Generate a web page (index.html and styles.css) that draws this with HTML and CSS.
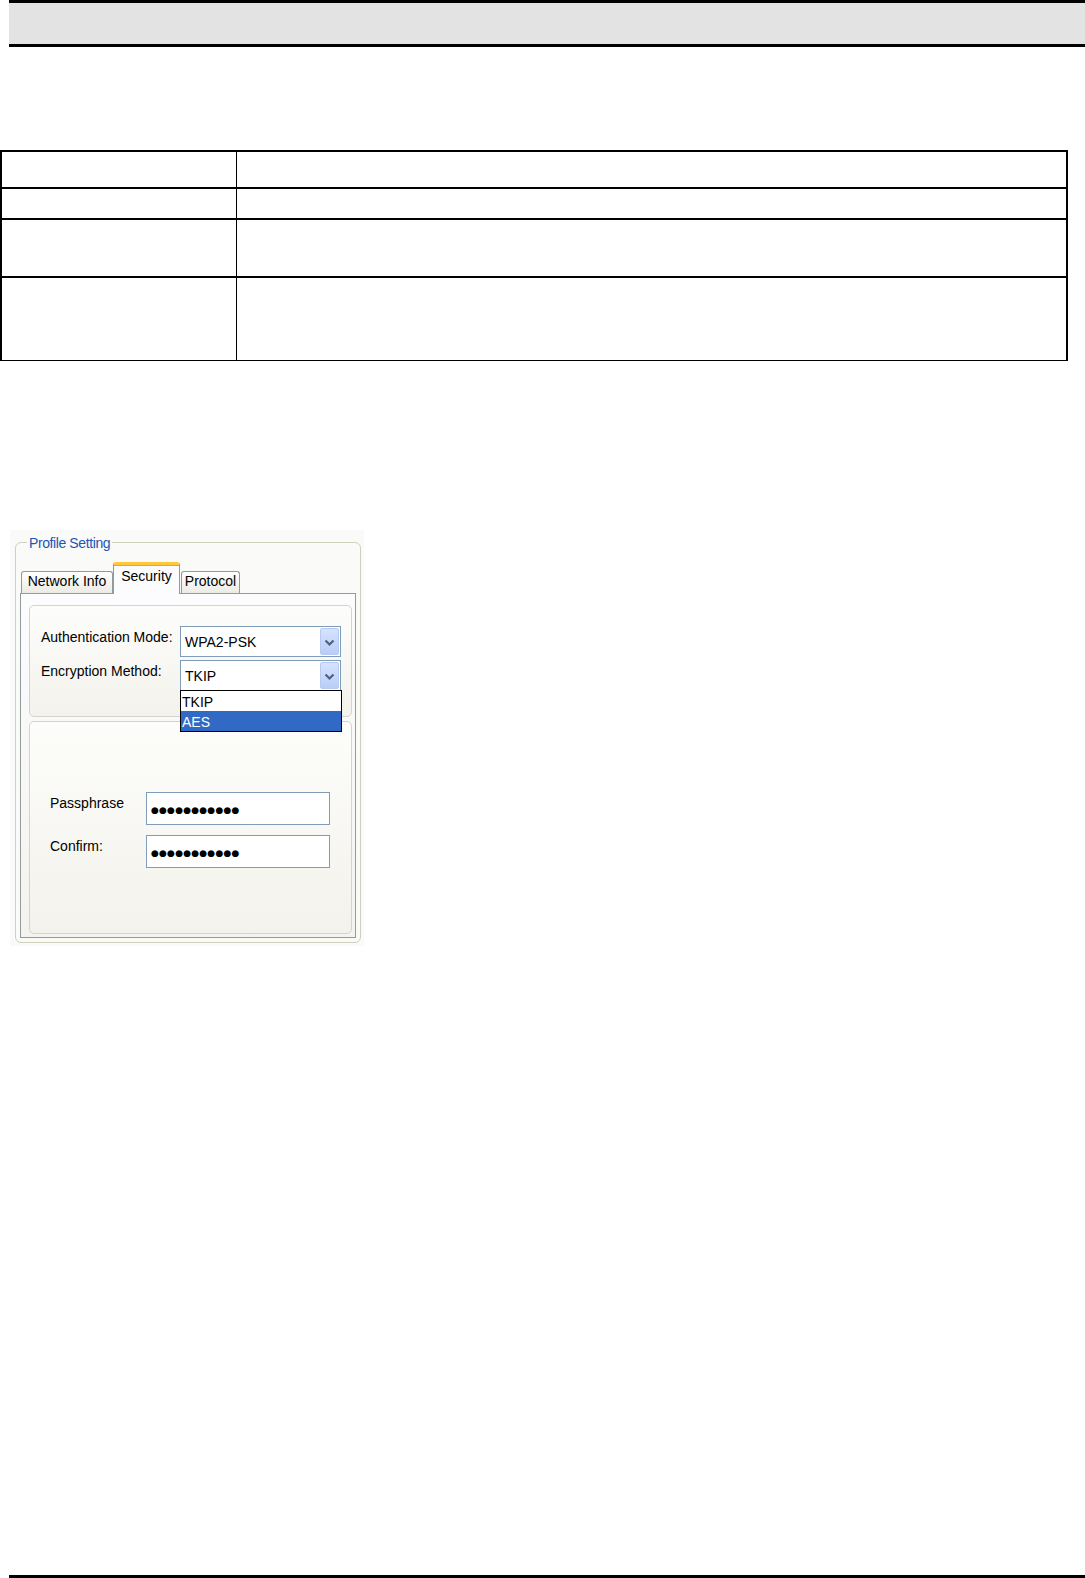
FILE: index.html
```html
<!DOCTYPE html>
<html lang="en">
<head>
    <meta charset="UTF-8">
    <meta name="viewport" content="width=device-width, initial-scale=1.0">
    <title>Profile Setting - Security</title>

    <link rel="stylesheet" href="styles.css">

</head>
<body>
<div class="page">
    <div class="page-header"></div>

    <!-- Settings table -->
    <div class="spec-table">
        <div class="spec-row row-1">
            <div class="spec-key"></div>
            <div class="spec-value"></div>
        </div>
        <div class="spec-row row-2">
            <div class="spec-key"></div>
            <div class="spec-value"></div>
        </div>
        <div class="spec-row row-3">
            <div class="spec-key"></div>
            <div class="spec-value"></div>
        </div>
        <div class="spec-row row-4">
            <div class="spec-key"></div>
            <div class="spec-value"></div>
        </div>
    </div>

    <!-- Screenshot of the utility -->
    <div class="screenshot">
        <div class="profile-box">
            <span class="profile-title">Profile Setting</span>

            <div class="tabs">
                <div class="tab tab-network">Network Info</div>
                <div class="tab tab-active">Security</div>
                <div class="tab tab-protocol">Protocol</div>
            </div>

            <div class="tab-panel">
                <div class="panel-group group-auth">
                    <div class="field-row">
                        <span class="field-label">Authentication Mode:</span>
                        <div class="combo">
                            <span class="combo-text">WPA2-PSK</span>
                            <span class="combo-btn">
                                <svg width="17" height="27" viewBox="0 0 17 27"><path d="M4.5 11.5 L8.5 15.5 L12.5 11.5" fill="none" stroke="#4d6185" stroke-width="2.2"/></svg>
                            </span>
                        </div>
                    </div>
                    <div class="field-row">
                        <span class="field-label">Encryption Method:</span>
                        <div class="combo">
                            <span class="combo-text">TKIP</span>
                            <span class="combo-btn">
                                <svg width="17" height="27" viewBox="0 0 17 27"><path d="M4.5 11.5 L8.5 15.5 L12.5 11.5" fill="none" stroke="#4d6185" stroke-width="2.2"/></svg>
                            </span>
                            <ul class="combo-list">
                                <li>TKIP</li>
                                <li class="selected">AES</li>
                            </ul>
                        </div>
                    </div>
                </div>

                <div class="panel-group group-key">
                    <div class="key-row">
                        <span class="key-label">Passphrase</span>
                        <div class="key-input"><span class="dots">●●●●●●●●●●●</span></div>
                    </div>
                    <div class="key-row">
                        <span class="key-label">Confirm:</span>
                        <div class="key-input"><span class="dots">●●●●●●●●●●●</span></div>
                    </div>
                </div>
            </div>
        </div>
    </div>

    <div class="page-footer"></div>
</div>
</body>
</html>
```

FILE: styles.css
```css
body {
    margin: 0;
    font-family: "Liberation Sans", Arial, sans-serif;
    color: #000;
    background: #fff;
}
.page {
    min-height: 1578px;
    display: flex;
    flex-direction: column;
}
.page-header {
    margin-left: 9px;
    height: 41px;
    border-top: 3px solid #000;
    border-bottom: 3px solid #000;
    background-color: #e3e3e3;
}
.page-footer {
    margin-top: auto;
    margin-left: 9px;
    height: 3px;
    background-color: #000;
}

/* table */
.spec-table {
    margin-top: 103px;
    width: 1068px;
    box-sizing: border-box;
    border: 2px solid #000;
    border-bottom-width: 1px;
}
.spec-row {
    display: flex;
    border-bottom: 2px solid #000;
}
.spec-row:last-child {
    border-bottom: none;
}
.row-1 { height: 35px; }
.row-2 { height: 29px; }
.row-3 { height: 56px; }
.row-4 { height: 82px; }
.spec-key {
    width: 234px;
    border-right: 1px solid #000;
}
.spec-value {
    flex: 1;
}

/* screenshot */
.screenshot {
    margin: 169px 0 0 10px;
    width: 354px;
    height: 416px;
    box-sizing: border-box;
    padding: 12px 3px 3px 5px;
    background-color: #fafaf8;
    font-size: 14px;
}
.profile-box {
    position: relative;
    height: 401px;
    box-sizing: border-box;
    padding: 19px 4px 4px 4px;
    border: 1px solid #d0d0bf;
    border-radius: 6px;
}
.profile-title {
    position: absolute;
    top: -8px;
    left: 11px;
    padding: 0 2px;
    line-height: 16px;
    letter-spacing: -0.4px;
    color: #1f55b5;
    background-color: #fafaf8;
}
.tabs {
    display: flex;
    align-items: flex-end;
    height: 31px;
    margin-left: 1px;
}
.tab {
    position: relative;
    height: 22px;
    box-sizing: border-box;
    border: 1px solid #919b9c;
    border-bottom: none;
    border-radius: 3px 3px 0 0;
    background: linear-gradient(#ffffff, #ecebe5);
    text-align: center;
    line-height: 19px;
    white-space: nowrap;
}
.tab-network {
    width: 92px;
}
.tab-active {
    width: 67px;
    height: 32px;
    margin-bottom: -1px;
    z-index: 1;
    border-top: 3px solid #ffc83c;
    box-shadow: inset 0 1px 0 #e6a03a;
    background: #fcfcfe;
    line-height: 22px;
}
.tab-protocol {
    width: 59px;
    margin-left: 1px;
}
.tab-panel {
    height: 345px;
    box-sizing: border-box;
    padding: 11px 3px 3px 8px;
    border: 1px solid #919b9c;
    background: linear-gradient(#fcfcfe, #f4f3ee);
}
.panel-group {
    box-sizing: border-box;
    border: 1px solid #d6d3ca;
    border-radius: 5px;
    background: linear-gradient(#fdfdfb, #f3f2ec);
}
.group-auth {
    height: 112px;
    padding: 20px 0 0 11px;
}
.group-key {
    height: 213px;
    margin-top: 4px;
    padding: 70px 0 0 20px;
}
.field-row {
    display: flex;
    align-items: flex-start;
    margin-bottom: 3px;
}
.field-label {
    width: 139px;
    padding-top: 4px;
    line-height: 14px;
    white-space: nowrap;
}
.combo {
    position: relative;
    display: flex;
    width: 161px;
    height: 31px;
    box-sizing: border-box;
    border: 1px solid #7f9db9;
    background-color: #fff;
}
.combo-text {
    flex: 1;
    padding: 2px 0 0 4px;
    line-height: 27px;
}
.combo-btn {
    width: 17px;
    margin: 1px;
    border: 1px solid #b6c9f3;
    border-radius: 2px;
    background: linear-gradient(#d6e3fe, #b9cdf8);
}
.combo-btn svg {
    display: block;
}
.combo-list {
    position: absolute;
    top: 100%;
    left: -1px;
    width: 162px;
    box-sizing: border-box;
    margin: 0;
    padding: 0;
    list-style: none;
    border: 1px solid #000;
    background-color: #fff;
}
.combo-list li {
    height: 20px;
    padding: 2px 0 0 1px;
    box-sizing: border-box;
    line-height: 18px;
}
.combo-list .selected {
    background-color: #316ac5;
    color: #fff;
}
.key-row {
    display: flex;
    align-items: center;
    margin-bottom: 10px;
}
.key-label {
    width: 96px;
    margin-top: -12px;
}
.key-input {
    width: 184px;
    height: 33px;
    box-sizing: border-box;
    padding-left: 4px;
    border: 1px solid #7f9db9;
    background-color: #fff;
    line-height: 31px;
}
.dots {
    font-family: "DejaVu Sans", sans-serif;
    font-size: 9px;
    letter-spacing: 0.2px;
}
```
